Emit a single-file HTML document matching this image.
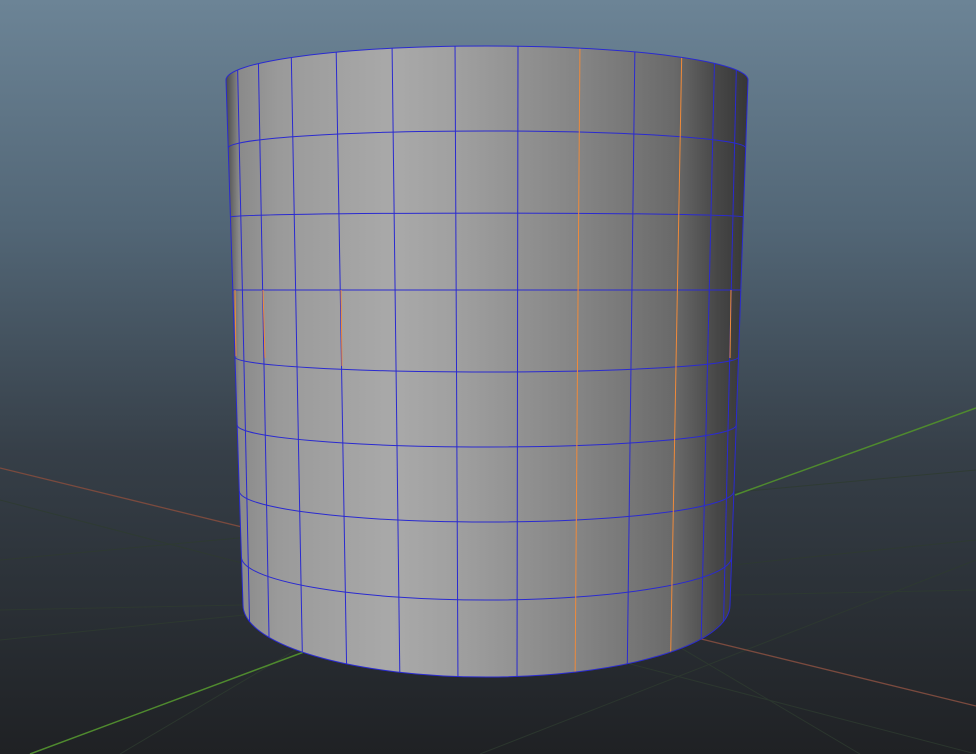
<!DOCTYPE html>
<html><head><meta charset="utf-8"><style>
html,body{margin:0;padding:0;width:976px;height:754px;overflow:hidden;background:#2a2f35}
svg{display:block}
</style></head><body>
<svg width="976" height="754" viewBox="0 0 976 754" xmlns="http://www.w3.org/2000/svg">
<defs>
<linearGradient id="bg" x1="0" y1="0" x2="0" y2="1">
<stop offset="0" stop-color="#6c8496"/>
<stop offset="0.3" stop-color="#526676"/>
<stop offset="0.6" stop-color="#363f48"/>
<stop offset="1" stop-color="#1f2124"/>
</linearGradient>
<linearGradient id="body" x1="226" y1="0" x2="748" y2="0" gradientUnits="userSpaceOnUse">
<stop offset="0" stop-color="#4a4a4a"/>
<stop offset="0.025" stop-color="#8a8a8a"/>
<stop offset="0.1" stop-color="#9a9a9a"/>
<stop offset="0.32" stop-color="#a9a9a9"/>
<stop offset="0.44" stop-color="#a0a0a0"/>
<stop offset="0.56" stop-color="#929292"/>
<stop offset="0.68" stop-color="#848484"/>
<stop offset="0.78" stop-color="#767676"/>
<stop offset="0.86" stop-color="#696969"/>
<stop offset="0.9" stop-color="#585858"/>
<stop offset="0.94" stop-color="#474747"/>
<stop offset="1" stop-color="#363636"/>
</linearGradient>
<clipPath id="cyl"><path d="M226,80 A261,34 0 0 1 748,80 L730,605 A243.5,72 0 0 1 243,605 Z"/></clipPath>
</defs>
<rect width="976" height="754" fill="url(#bg)"/>
<g stroke="#2e3b30" stroke-width="1" fill="none" opacity="0.8">
<line x1="0" y1="560" x2="976" y2="470"/>
<line x1="0" y1="640" x2="976" y2="540"/>
<line x1="0" y1="610" x2="976" y2="590"/>
<line x1="480" y1="754" x2="976" y2="560"/>
<line x1="0" y1="500" x2="976" y2="754"/>
<line x1="120" y1="754" x2="380" y2="600"/>
<line x1="860" y1="754" x2="600" y2="600"/>
</g>
<line x1="0" y1="468" x2="976" y2="706" stroke="#7a4a3e" stroke-width="1.3"/>
<line x1="30" y1="754" x2="320" y2="646" stroke="#4f8a2e" stroke-width="1.5"/>
<line x1="735" y1="495" x2="976" y2="408" stroke="#4f8a2e" stroke-width="1.5"/>
<path d="M226,80 A261,34 0 0 1 748,80 L730,605 A243.5,72 0 0 1 243,605 Z" fill="url(#body)"/>
<g clip-path="url(#cyl)" fill="none" stroke-width="1">
<g stroke="#2a2ad0">
<line x1="237" y1="40" x2="251" y2="690"/>
<line x1="258" y1="40" x2="270" y2="690"/>
<line x1="291" y1="40" x2="303" y2="690"/>
<line x1="336" y1="40" x2="347" y2="690"/>
<line x1="392" y1="40" x2="400" y2="690"/>
<line x1="455" y1="40" x2="458" y2="690"/>
<line x1="518" y1="40" x2="517" y2="690"/>
<line x1="635" y1="40" x2="627" y2="690"/>
<line x1="715" y1="40" x2="700" y2="690"/>
<line x1="737" y1="40" x2="722" y2="690"/>
<path d="M228.2,148 A258.7,17 0 0 1 745.7,148"/>
<path d="M230.4,217 A256.5,4 0 0 1 743.3,217"/>
<path d="M232.8,290 L740.8,290"/>
<path d="M235,357 A251.7,15 0 0 0 738.5,357"/>
<path d="M237.2,425 A249.5,22 0 0 0 736.2,425"/>
<path d="M239.3,491 A247.3,31 0 0 0 733.9,491"/>
<path d="M241.4,557 A245.1,43 0 0 0 731.6,557"/>
</g>
<g stroke="#f08a3a">
<line x1="580" y1="40" x2="575" y2="690"/>
<line x1="682" y1="40" x2="670" y2="690"/>
<line x1="235" y1="290" x2="236" y2="356"/>
<line x1="263" y1="290" x2="265" y2="358"/>
<line x1="341" y1="290" x2="342" y2="366"/>
<line x1="731" y1="290" x2="730" y2="358"/>
</g>
</g>
<path d="M226,80 A261,34 0 0 1 748,80 L730,605 A243.5,72 0 0 1 243,605 Z" fill="none" stroke="#2a2ad0" stroke-width="1"/>
</svg>
</body></html>
